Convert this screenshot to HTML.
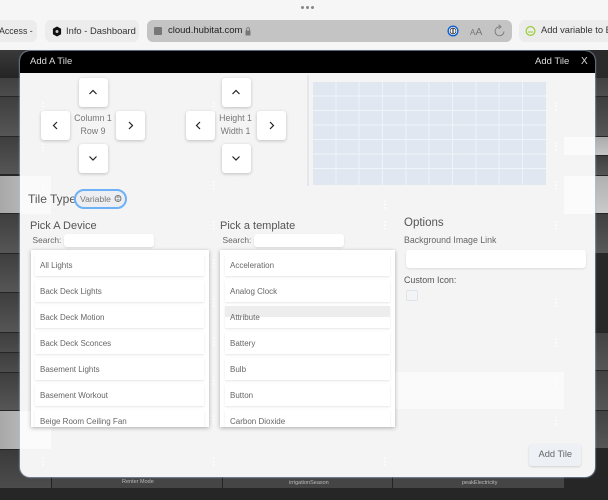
<!DOCTYPE html>
<html>
<head>
<meta charset="utf-8">
<style>
html,body{margin:0;padding:0;width:608px;height:500px;overflow:hidden;background:#262626;font-family:"Liberation Sans",sans-serif;}
div{position:absolute;box-sizing:border-box;}
svg{position:absolute;overflow:visible;}
.t{white-space:nowrap;color:#555;line-height:1;}
.btn{width:28.5px;height:29px;background:#fff;border-radius:3px;box-shadow:0 1px 3px rgba(0,0,0,.22);}
.item{background:#fff;height:22px;box-shadow:0 1px 2px rgba(0,0,0,.1);font-size:8px;color:#666;line-height:24px;padding-left:5px;white-space:nowrap;}
.list{background:#fff;overflow:hidden;box-shadow:0 1px 4px rgba(0,0,0,.3);height:177px;top:250px;}
.inp{background:#fff;border-radius:3px;box-shadow:0 1px 2px rgba(0,0,0,.1);}
.l{left:0;width:52px;}
.r{left:564px;width:44px;}
</style>
</head>
<body>
<!-- page background : left strip -->
<div class="l" style="top:50px;height:28px;background:linear-gradient(#3a3a3a,#242424)"></div>
<div class="l" style="top:78px;height:18px;background:linear-gradient(#404040,#4c4c4c)"></div>
<div class="l" style="top:97px;height:39px;background:linear-gradient(#3e3e3e,#565656)"></div>
<div class="l" style="top:137px;height:37px;background:linear-gradient(#3e3e3e,#565656)"></div>
<div class="l" style="top:176px;height:37px;background:linear-gradient(90deg,#a8a8a8,#c8c8c8)"></div>
<div class="l" style="top:214px;height:39px;background:linear-gradient(#3e3e3e,#565656)"></div>
<div class="l" style="top:254px;height:38px;background:linear-gradient(#3e3e3e,#565656)"></div>
<div class="l" style="top:293px;height:39px;background:linear-gradient(#3e3e3e,#565656)"></div>
<div class="l" style="top:333px;height:19px;background:linear-gradient(#3e3e3e,#4c4c4c)"></div>
<div class="l" style="top:353px;height:19px;background:linear-gradient(#3e3e3e,#4c4c4c)"></div>
<div class="l" style="top:373px;height:37px;background:linear-gradient(#3e3e3e,#565656)"></div>
<div class="l" style="top:411px;height:38px;background:linear-gradient(90deg,#a8a8a8,#cacaca)"></div>
<div class="l" style="top:450px;height:38px;background:linear-gradient(#3a3a3a,#4c4c4c)"></div>
<!-- right strip -->
<div class="r" style="top:50px;height:28px;background:#2a2a2a"></div>
<div class="r" style="top:78px;height:18px;background:linear-gradient(#424242,#4e4e4e)"></div>
<div class="r" style="top:97px;height:39px;background:linear-gradient(#3e3e3e,#565656)"></div>
<div class="r" style="top:137px;height:18px;background:linear-gradient(#aaa,#c6c6c6)"></div>
<div class="r" style="top:156px;height:19px;background:linear-gradient(#3e3e3e,#565656)"></div>
<div class="r" style="top:176px;height:37px;background:linear-gradient(#b0b0b0,#cacaca)"></div>
<div class="r" style="top:214px;height:39px;background:linear-gradient(#404040,#585858)"></div>
<div class="r" style="top:253px;height:79px;background:#282828"></div>
<div class="r" style="top:333px;height:37px;background:linear-gradient(#424242,#565656)"></div>
<div class="r" style="top:371px;height:39px;background:linear-gradient(#424242,#565656)"></div>
<div class="r" style="top:411px;height:37px;background:linear-gradient(#424242,#565656)"></div>
<!-- bottom row -->
<div style="left:52px;top:470px;width:512px;height:18px;background:#454545"></div>
<div style="left:51px;top:470px;width:1px;height:18px;background:#222"></div>
<div style="left:222px;top:470px;width:1px;height:18px;background:#222"></div>
<div style="left:392px;top:470px;width:1px;height:18px;background:#222"></div>
<div class="t" style="left:122px;top:480px;font-size:5.5px;color:#bbb">Renter Mode</div>
<div class="t" style="left:289px;top:481px;font-size:5.5px;color:#bbb">irrigationSeason</div>
<div class="t" style="left:462px;top:481px;font-size:5.5px;color:#bbb">peakElectricity</div>

<!-- browser chrome -->
<div style="left:0;top:0;width:608px;height:50px;background:#f6f6f6"></div>
<div style="left:301px;top:6px;width:3px;height:3px;border-radius:50%;background:#888"></div>
<div style="left:306px;top:6px;width:3px;height:3px;border-radius:50%;background:#888"></div>
<div style="left:311px;top:6px;width:3px;height:3px;border-radius:50%;background:#888"></div>
<div style="left:-8px;top:20px;width:45px;height:22px;border-radius:6px;background:#ececec"></div>
<div class="t" style="left:-1px;top:26.5px;font-size:8.8px;color:#333">Access -</div>
<div style="left:45px;top:20px;width:94px;height:22px;border-radius:6px;background:#ececec"></div>
<svg style="left:52px;top:25.500px" width="10" height="11" viewBox="0 0 11 12"><path d="M5.500 0.500 L10 3 V9 L5.500 11.500 L1 9 V3 Z" fill="#111"/><circle cx="5.500" cy="6" r="1.600" fill="#ccc"/></svg>
<div class="t" style="left:66px;top:26px;font-size:9.400px;color:#333;width:70px;overflow:hidden">Info - Dashboard</div>
<div style="left:147px;top:20px;width:365px;height:22px;border-radius:6px;background:#c4c4c4"></div>
<div style="left:154px;top:27px;width:7.500px;height:7.500px;background:#777;border-radius:1px"></div>
<div class="t" style="left:168px;top:26px;font-size:9.500px;color:#222">cloud.hubitat.com</div>
<svg style="left:245px;top:26.500px" width="6" height="9" viewBox="0 0 6 9"><rect x="0.500" y="3.500" width="5" height="5" rx="0.600" fill="#777"/><path d="M1.600 3.500V2a1.400 1.400 0 0 1 2.800 0V3.500" fill="none" stroke="#777" stroke-width="0.900"/></svg>
<svg style="left:447px;top:25px" width="12" height="12" viewBox="0 0 13 13"><circle cx="6.500" cy="6.500" r="6" fill="#0a5fd6"/><circle cx="6.500" cy="6.500" r="4.500" fill="#fff"/><circle cx="6.500" cy="6.500" r="3.200" fill="none" stroke="#222" stroke-width="0.800"/><rect x="5.900" y="3.800" width="1.200" height="5.400" fill="#222"/></svg>
<div class="t" style="left:470px;top:26.500px;font-size:10.500px;color:#777"><span style="font-size:8px">A</span>A</div>
<svg style="left:494px;top:24px" width="11" height="14" viewBox="0 0 11 14"><path d="M6 2.800A4.500 4.500 0 1 0 10 7.500" fill="none" stroke="#777" stroke-width="0.900"/><path d="M4.700 0.800 L7 2.800 L4.700 4.800" fill="none" stroke="#777" stroke-width="0.900"/></svg>
<div style="left:519px;top:20px;width:100px;height:22px;border-radius:6px;background:#ececec"></div>
<svg style="left:525px;top:25px" width="11" height="12" viewBox="0 0 11 12"><circle cx="5.500" cy="6" r="4.400" fill="none" stroke="#9c3" stroke-width="1.200"/><path d="M3 7h5" stroke="#9c3" stroke-width="1"/></svg>
<div class="t" style="left:541px;top:26px;font-size:9.300px;color:#333">Add variable to B</div>

<!-- modal -->
<div style="left:20px;top:51px;width:574.500px;height:425.500px;background:#f4f4f4;border-radius:10px;overflow:hidden;box-shadow:0 0 1px 1px rgba(170,195,235,.5)">
  <div style="left:0;top:0;width:100%;height:22px;background:#000"></div>
  <div style="left:0;top:125px;width:31px;height:38px;background:#fafafa"></div>
  <div style="left:0;top:360px;width:31px;height:38px;background:#fbfbfb"></div>
  <div style="left:544px;top:86px;width:31px;height:18px;background:#fbfbfb"></div>
  <div style="left:544px;top:125px;width:31px;height:38px;background:#fbfbfb"></div>
  <div style="left:375px;top:321px;width:169px;height:37px;background:#fafafa"></div>
</div>
<div class="t" style="left:30px;top:57px;font-size:9.500px;color:#ddd">Add A Tile</div>
<div class="t" style="left:535px;top:57px;font-size:9.500px;color:#ddd">Add Tile</div>
<div class="t" style="left:581px;top:57px;font-size:10px;color:#ddd">X</div>

<!-- ghost dots -->
<svg style="left:0;top:0" width="608" height="500"><g fill="#fff">
<circle cx="43" cy="103" r=".9"/><circle cx="43" cy="106.500" r=".9"/><circle cx="43" cy="110" r=".9"/>
<circle cx="43" cy="144" r=".9"/><circle cx="43" cy="147.500" r=".9"/><circle cx="43" cy="151" r=".9"/>
<circle cx="43" cy="182" r=".9"/><circle cx="43" cy="185.500" r=".9"/><circle cx="43" cy="189" r=".9"/>
<circle cx="43" cy="458" r=".9"/><circle cx="43" cy="461.500" r=".9"/><circle cx="43" cy="465" r=".9"/>
<circle cx="213.500" cy="103" r=".9"/><circle cx="213.500" cy="106.500" r=".9"/><circle cx="213.500" cy="110" r=".9"/>
<circle cx="213.500" cy="182" r=".9"/><circle cx="213.500" cy="185.500" r=".9"/><circle cx="213.500" cy="189" r=".9"/>
<circle cx="213.500" cy="222" r=".9"/><circle cx="213.500" cy="225.500" r=".9"/><circle cx="213.500" cy="229" r=".9"/>
<circle cx="213.500" cy="260" r=".9"/><circle cx="213.500" cy="263.500" r=".9"/><circle cx="213.500" cy="267" r=".9"/>
<circle cx="213.500" cy="299" r=".9"/><circle cx="213.500" cy="302.500" r=".9"/><circle cx="213.500" cy="306" r=".9"/>
<circle cx="213.500" cy="338" r=".9"/><circle cx="213.500" cy="341.500" r=".9"/><circle cx="213.500" cy="345" r=".9"/>
<circle cx="213.500" cy="377" r=".9"/><circle cx="213.500" cy="380.500" r=".9"/><circle cx="213.500" cy="384" r=".9"/>
<circle cx="213.500" cy="416" r=".9"/><circle cx="213.500" cy="419.500" r=".9"/><circle cx="213.500" cy="423" r=".9"/>
<circle cx="213.500" cy="458" r=".9"/><circle cx="213.500" cy="461.500" r=".9"/><circle cx="213.500" cy="465" r=".9"/>
<circle cx="385" cy="201" r=".9"/><circle cx="385" cy="204.500" r=".9"/><circle cx="385" cy="208" r=".9"/>
<circle cx="385" cy="222" r=".9"/><circle cx="385" cy="225.500" r=".9"/><circle cx="385" cy="229" r=".9"/>
<circle cx="385" cy="458" r=".9"/><circle cx="385" cy="461.500" r=".9"/><circle cx="385" cy="465" r=".9"/>
<circle cx="556" cy="103" r=".9"/><circle cx="556" cy="106.500" r=".9"/><circle cx="556" cy="110" r=".9"/>
<circle cx="556" cy="143" r=".9"/><circle cx="556" cy="146.500" r=".9"/><circle cx="556" cy="150" r=".9"/>
<circle cx="556" cy="182" r=".9"/><circle cx="556" cy="185.500" r=".9"/><circle cx="556" cy="189" r=".9"/>
<circle cx="556" cy="222" r=".9"/><circle cx="556" cy="225.500" r=".9"/><circle cx="556" cy="229" r=".9"/>
<circle cx="556" cy="299" r=".9"/><circle cx="556" cy="302.500" r=".9"/><circle cx="556" cy="306" r=".9"/>
<circle cx="556" cy="339" r=".9"/><circle cx="556" cy="342.500" r=".9"/><circle cx="556" cy="346" r=".9"/>
<circle cx="556" cy="378" r=".9"/><circle cx="556" cy="381.500" r=".9"/><circle cx="556" cy="385" r=".9"/>
<circle cx="556" cy="417" r=".9"/><circle cx="556" cy="420.500" r=".9"/><circle cx="556" cy="424" r=".9"/>
</g></svg>

<!-- position pad -->
<div class="btn" style="left:79px;top:78px"></div>
<div class="btn" style="left:41px;top:111px"></div>
<div class="btn" style="left:116px;top:111px"></div>
<div class="btn" style="left:79px;top:144px"></div>
<div class="t" style="left:73px;top:114px;width:40px;text-align:center;font-size:8.800px;color:#777">Column 1</div>
<div class="t" style="left:73px;top:127px;width:40px;text-align:center;font-size:8.800px;color:#777">Row 9</div>
<div class="btn" style="left:222px;top:78px"></div>
<div class="btn" style="left:186px;top:111px"></div>
<div class="btn" style="left:257px;top:111px"></div>
<div class="btn" style="left:222px;top:144px"></div>
<div class="t" style="left:215.500px;top:114px;width:40px;text-align:center;font-size:8.800px;color:#777">Height 1</div>
<div class="t" style="left:215.500px;top:127px;width:40px;text-align:center;font-size:8.800px;color:#777">Width 1</div>
<svg style="left:0;top:0" width="608" height="500"><g fill="none" stroke="#222" stroke-width="1.200">
<path d="M89.500 94L93 90.500L96.500 94"/><path d="M232.500 94L236 90.500L239.500 94"/>
<path d="M89.500 156.500L93 160L96.500 156.500"/><path d="M232.500 156.500L236 160L239.500 156.500"/>
<path d="M57 122L53.500 125.500L57 129"/><path d="M200 122L196.500 125.500L200 129"/>
<path d="M129 122L132.500 125.500L129 129"/><path d="M270 122L273.500 125.500L270 129"/>
</g></svg>

<!-- grid -->
<div style="left:307px;top:75px;width:1.500px;height:111px;background:#e4e6e9"></div>
<svg style="left:313px;top:82px" width="233" height="103" viewBox="0 0 233 103">
<rect width="233" height="103" fill="#e1e7f0"/>
<g stroke="#f1f4f8" stroke-width="0.900">
<path d="M23 0V103M46 0V103M69.500 0V103M93 0V103M116 0V103M139.500 0V103M163 0V103M186 0V103M209.500 0V103"/>
<path d="M0 14H233M0 28.500H233M0 43H233M0 57.500H233M0 72H233M0 86.500H233"/>
</g></svg>

<!-- tile type -->
<div class="t" style="left:28px;top:192.500px;font-size:12px;color:#555">Tile Type:</div>
<div style="left:74px;top:189px;width:53px;height:20px;border:2px solid #6db1f6;border-radius:10px;background:#eceef1"></div>
<div class="t" style="left:80px;top:194.500px;font-size:8.600px;color:#777">Variable</div>
<svg style="left:114px;top:194px" width="8" height="9" viewBox="0 0 8 9"><circle cx="4" cy="4.500" r="3" fill="none" stroke="#555" stroke-width="0.800"/><path d="M2.700 3.800L4 2.700L5.300 3.800M2.700 5.200L4 6.300L5.300 5.200" fill="none" stroke="#555" stroke-width="0.600"/></svg>

<!-- device column -->
<div class="t" style="left:30px;top:220.500px;font-size:11px;color:#555">Pick A Device</div>
<div class="t" style="left:32.500px;top:236px;font-size:8.400px;color:#666">Search:</div>
<div class="inp" style="left:63.500px;top:234px;width:90px;height:13px"></div>
<div class="list" style="left:31px;width:178px">
  <div class="item" style="left:4px;top:4px;width:169px">All Lights</div>
  <div class="item" style="left:4px;top:30px;width:169px">Back Deck Lights</div>
  <div class="item" style="left:4px;top:56px;width:169px">Back Deck Motion</div>
  <div class="item" style="left:4px;top:82px;width:169px">Back Deck Sconces</div>
  <div class="item" style="left:4px;top:108px;width:169px">Basement Lights</div>
  <div class="item" style="left:4px;top:134px;width:169px">Basement Workout</div>
  <div class="item" style="left:4px;top:160px;width:169px">Beige Room Ceiling Fan</div>
</div>

<!-- template column -->
<div class="t" style="left:220px;top:220.500px;font-size:11px;color:#555">Pick a template</div>
<div class="t" style="left:222.500px;top:236px;font-size:8.400px;color:#666">Search:</div>
<div class="inp" style="left:253.500px;top:234px;width:90px;height:13px"></div>
<div class="list" style="left:220px;width:175px">
  <div class="item" style="left:5px;top:4px;width:165px">Acceleration</div>
  <div class="item" style="left:5px;top:30px;width:165px">Analog Clock</div>
  <div class="item" style="left:5px;top:56px;width:165px;background:linear-gradient(#ededed 50%,#fff 50%)">Attribute</div>
  <div class="item" style="left:5px;top:82px;width:165px">Battery</div>
  <div class="item" style="left:5px;top:108px;width:165px">Bulb</div>
  <div class="item" style="left:5px;top:134px;width:165px">Button</div>
  <div class="item" style="left:5px;top:160px;width:165px">Carbon Dioxide</div>
</div>

<!-- options -->
<div class="t" style="left:404px;top:218px;font-size:11.500px;color:#555">Options</div>
<div class="t" style="left:404px;top:236px;font-size:8.800px;color:#666">Background Image Link</div>
<div class="inp" style="left:406px;top:250px;width:179.500px;height:18px"></div>
<div class="t" style="left:404px;top:276px;font-size:8.900px;color:#555">Custom Icon:</div>
<div style="left:406px;top:289.500px;width:11.500px;height:11.500px;border:1px solid #dfe4ec;border-radius:2px;background:#f3f4f6"></div>

<!-- add tile -->
<div style="left:529px;top:444px;width:52px;height:22px;background:#edf1f5;border-radius:3px;box-shadow:0 1px 2px rgba(0,0,0,.15)"></div>
<div class="t" style="left:538.500px;top:450px;font-size:9.300px;color:#666">Add Tile</div>
</body>
</html>
